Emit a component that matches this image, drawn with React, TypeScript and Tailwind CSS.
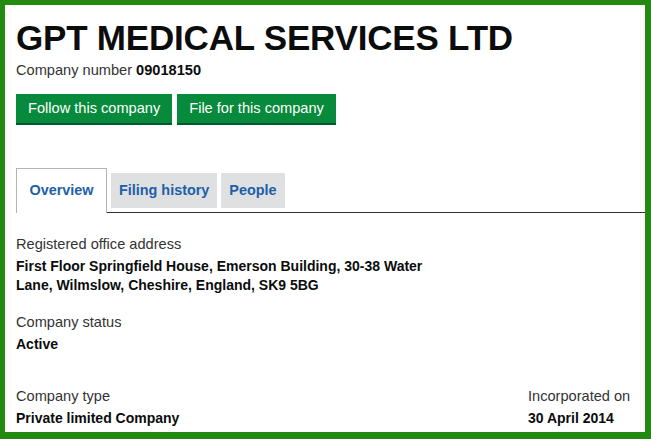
import React from "react";

type Field = { label: string; value: React.ReactNode };

const tabs = [
  { name: "Overview", active: true },
  { name: "Filing history", active: false },
  { name: "People", active: false },
];

const FieldBlock: React.FC<Field> = ({ label, value }) => (
  <div>
    <div className="text-[14.6px] leading-[20px] text-[#333]">{label}</div>
    <div className="mt-[3px] text-[14px] leading-[19px] font-bold text-[#0b0c0c]">{value}</div>
  </div>
);

export default function App() {
  return (
    <div
      className="w-[651px] h-[439px] bg-[#228b0f] pt-[5px] pl-[5px] pr-[6px] pb-[7px]"
      style={{ fontFamily: '"Liberation Sans", Arial, sans-serif' }}
    >
      <div className="h-full bg-white overflow-hidden pl-[11px] pt-[12px]">
        <h1 className="text-[35px] leading-[42px] font-bold text-[#0b0c0c] tracking-[-0.2px]">
          GPT MEDICAL SERVICES LTD
        </h1>
        <p className="mt-[2px] text-[14.6px] leading-[18px] text-[#333]">
          Company number <span className="font-bold text-[#0b0c0c]">09018150</span>
        </p>

        <div className="mt-[15px] flex gap-[5px]">
          <button className="h-[29px] px-[12px] bg-[#078a3b] text-white text-[14.6px] shadow-[0_2px_0_#005a2b]">
            Follow this company
          </button>
          <button className="h-[29px] px-[12px] bg-[#078a3b] text-white text-[14.6px] shadow-[0_2px_0_#005a2b]">
            File for this company
          </button>
        </div>

        <div className="mt-[45px] flex items-end border-b border-[#333]">
          {tabs.map((t) =>
            t.active ? (
              <div
                key={t.name}
                className="h-[45px] w-[91px] -mb-px flex items-center justify-center bg-white border border-b-0 border-[#b1b4b6] text-[14.4px] font-bold text-[#1d5fa8]"
              >
                {t.name}
              </div>
            ) : (
              <div
                key={t.name}
                className="h-[35px] ml-[4px] mb-[4px] px-[8px] flex items-center bg-[#dee0e2] text-[14.4px] font-bold text-[#1d5fa8]"
              >
                {t.name}
              </div>
            )
          )}
        </div>

        <div className="pt-[21px] flex flex-col">
          <FieldBlock
            label="Registered office address"
            value={
              <>
                First Floor Springfield House, Emerson Building, 30-38 Water
                <br />
                Lane, Wilmslow, Cheshire, England, SK9 5BG
              </>
            }
          />
          <div className="mt-[17px]">
            <FieldBlock label="Company status" value="Active" />
          </div>
          <div className="mt-[32px] flex">
            <div className="w-[512px]">
              <FieldBlock label="Company type" value="Private limited Company" />
            </div>
            <FieldBlock label="Incorporated on" value="30 April 2014" />
          </div>
        </div>
      </div>
    </div>
  );
}
